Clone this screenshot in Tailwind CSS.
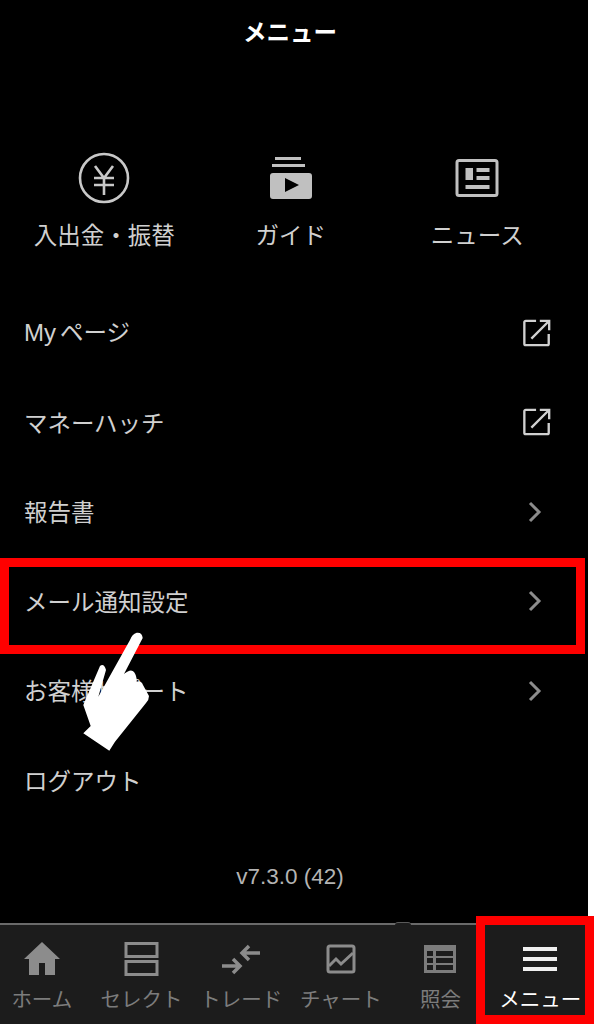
<!DOCTYPE html>
<html lang="ja">
<head>
<meta charset="UTF-8">
<title>メニュー</title>
<script src="https://cdn.jsdelivr.net/npm/@tailwindcss/browser@4"></script>
</head>
<body class="bg-white font-['Noto_Sans_CJK_JP','Noto_Sans',sans-serif]">
<div class="relative w-[594px] h-[1024px] overflow-hidden bg-white">
  <div class="w-[588px] h-[1024px] bg-black flex flex-col text-[#d0d0d0]">
    <div class="h-[60px] pt-[3px] pr-[8px] flex items-center justify-center text-[23.500px] font-bold text-white">メニュー</div>

    <div class="mt-[92px] pl-[11px] grid grid-cols-[186.500px_186.500px_186.500px] h-[100px]">
      <div class="flex flex-col items-center">
        <svg width="54" height="54" viewBox="0 0 54 54" fill="none" stroke="#c8c8c8" stroke-width="2.600"><circle cx="27" cy="26" r="24"/><path d="M18 14l9 12 9-12M17 26h20M17 33h20M27 26v17"/></svg>
        <span class="mt-[10px] text-[23.500px] leading-[36px]">入出金・振替</span>
      </div>
      <div class="flex flex-col items-center">
        <svg width="54" height="54" viewBox="0 0 54 54"><path fill="#c0c0c0" d="M11 5h26v3H11zM8 12h33v3H8zM9 21h36a3 3 0 0 1 3 3v20a3 3 0 0 1-3 3H9a3 3 0 0 1-3-3V24a3 3 0 0 1 3-3z"/><path fill="#000" d="M21 26l14 7-14 7z"/></svg>
        <span class="mt-[10px] text-[23.500px] leading-[36px]">ガイド</span>
      </div>
      <div class="flex flex-col items-center">
        <svg width="54" height="54" viewBox="0 0 54 54" fill="none"><rect x="7" y="8.500" width="40" height="35" rx="2" stroke="#c0c0c0" stroke-width="3"/><path fill="#c0c0c0" d="M15.500 16h7.500v12h-7.500zM26.500 16h13v4h-13zM26.500 24h13v4h-13zM15.500 33h24v4h-24z"/></svg>
        <span class="mt-[10px] text-[23.500px] leading-[36px]">ニュース</span>
      </div>
    </div>

    <div class="mt-[36px] flex flex-col text-[23.500px]">
      <div class="h-[89.500px] pl-[24px] pr-[36px] flex items-center justify-between">
        <span><span class="font-['Liberation_Sans',sans-serif] text-[24px] mr-[4px]">My</span>ページ</span>
        <svg width="30" height="30" viewBox="0 0 32 32" fill="none" stroke="#d0d0d0" stroke-width="2.500"><path d="M15 3H4a1.500 1.500 0 0 0-1.500 1.500v23A1.500 1.500 0 0 0 4 29h23a1.500 1.500 0 0 0 1.500-1.500V17M10 22L28 4M19 3h10v10"/></svg>
      </div>
      <div class="h-[89.500px] pl-[24px] pr-[36px] flex items-center justify-between">
        <span>マネーハッチ</span>
        <svg width="30" height="30" viewBox="0 0 32 32" fill="none" stroke="#d0d0d0" stroke-width="2.500"><path d="M15 3H4a1.500 1.500 0 0 0-1.500 1.500v23A1.500 1.500 0 0 0 4 29h23a1.500 1.500 0 0 0 1.500-1.500V17M10 22L28 4M19 3h10v10"/></svg>
      </div>
      <div class="h-[89.500px] pl-[24px] pr-[43px] flex items-center justify-between">
        <span>報告書</span>
        <svg width="20" height="24" viewBox="0 0 20 24" fill="none" stroke="#8c8c8c" stroke-width="3"><path d="M5 3l9 9-9 9"/></svg>
      </div>
      <div class="h-[89.500px] pl-[24px] pr-[43px] flex items-center justify-between">
        <span>メール通知設定</span>
        <svg width="20" height="24" viewBox="0 0 20 24" fill="none" stroke="#8c8c8c" stroke-width="3"><path d="M5 3l9 9-9 9"/></svg>
      </div>
      <div class="h-[89.500px] pl-[24px] pr-[43px] flex items-center justify-between">
        <span>お客様サポート</span>
        <svg width="20" height="24" viewBox="0 0 20 24" fill="none" stroke="#8c8c8c" stroke-width="3"><path d="M5 3l9 9-9 9"/></svg>
      </div>
      <div class="h-[89.500px] pl-[24px] pr-[43px] flex items-center">
        <span>ログアウト</span>
      </div>
    </div>

    <div class="mt-[38px] pr-[8px] text-center text-[22.500px] leading-[28px] text-[#b4b4b4] font-['Liberation_Sans',sans-serif]">v7.3.0 (42)</div>

    <div class="relative mt-auto h-[101px] bg-[#1c1c1c] border-t-2 border-[#6a6a6a]">
      <div class="absolute left-[395px] top-[-3px] w-[16px] h-[3px] bg-[#1c1c1c] border-t border-[#5a5a5a] rounded-t-sm"></div>
      <div class="overflow-hidden h-full">
        <div class="w-[598px] -ml-[8px] grid grid-cols-6 text-[#7c7c7c] text-[20.500px]">
          <div class="flex flex-col items-center pt-[17px]">
            <svg width="40" height="36" viewBox="0 0 40 36"><path fill="#8c8c8c" d="M20 0L38 17h-5v16H23V21h-6v12H7V17H2z"/></svg>
            <span class="mt-[6px] leading-[28px] whitespace-nowrap">ホーム</span>
          </div>
          <div class="flex flex-col items-center pt-[17px]">
            <svg width="40" height="36" viewBox="0 0 40 36" fill="none" stroke="#8c8c8c" stroke-width="3"><rect x="5" y="1.500" width="31" height="13"/><rect x="5" y="19.500" width="31" height="13"/></svg>
            <span class="mt-[6px] leading-[28px] whitespace-nowrap">セレクト</span>
          </div>
          <div class="flex flex-col items-center pt-[17px]">
            <svg width="40" height="36" viewBox="0 0 40 36" fill="none" stroke="#8c8c8c" stroke-width="3.500"><path d="M39 11H21M28 4l-7 7 7 7M1 24h18M12 17l7 7-7 7"/></svg>
            <span class="mt-[6px] leading-[28px] whitespace-nowrap">トレード</span>
          </div>
          <div class="flex flex-col items-center pt-[17px]">
            <svg width="40" height="36" viewBox="0 0 40 36" fill="none" stroke="#8c8c8c" stroke-width="3"><rect x="7" y="4" width="26" height="26" rx="2"/><path d="M8 24l7-7 5 5 12-11"/></svg>
            <span class="mt-[6px] leading-[28px] whitespace-nowrap">チャート</span>
          </div>
          <div class="flex flex-col items-center pt-[17px]">
            <svg width="40" height="36" viewBox="0 0 40 36"><path fill="#7c7c7c" fill-rule="evenodd" d="M4 3h32v28H4zM7 9v5h6V9zm9 0v5h17V9zM7 16v5h6v-5zm9 0v5h17v-5zM7 23v5h6v-5zm9 0v5h17v-5z"/></svg>
            <span class="mt-[6px] leading-[28px] whitespace-nowrap">照会</span>
          </div>
          <div class="flex flex-col items-center pt-[17px] text-white">
            <svg width="40" height="36" viewBox="0 0 40 36" fill="#f0f0f0"><path d="M3 5h34v4H3zM3 15h34v4H3zM3 25h34v4H3z"/></svg>
            <span class="mt-[6px] leading-[28px] whitespace-nowrap">メニュー</span>
          </div>
        </div>
      </div>
    </div>
  </div>

  <div class="absolute left-0 top-[558px] w-[585px] h-[96px] border-[9px] border-[#ff0000]"></div>
  <div class="absolute left-[476px] top-[916px] w-[118px] h-[108px] border-[9px] border-[#ff0000]"></div>

  <svg class="absolute left-[80px] top-[630px]" width="72" height="122" viewBox="0 0 72 122"><path fill="#fff" d="M56.700 2.700Q62 2 62.700 8L44 44Q51 38 54 42Q57 46 56.700 51.700Q61 50 63 55L69 66Q69 70 66 73L35 111.700L29.300 120.700L3.300 103.300L10.700 96L3.300 75L20 36Q24 33 26 40L18.300 66.700L50 10Q52 4 56.700 2.700z"/></svg>
</div>
</body>
</html>
